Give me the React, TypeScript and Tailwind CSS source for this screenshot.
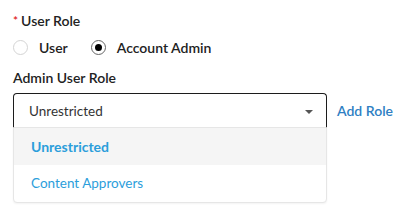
import React from 'react';

const font = { fontFamily: '"Source Sans Pro", Lato, "Noto Sans", sans-serif' };

const Radio = ({ checked, label }: { checked?: boolean; label: string }) => (
    <label className="flex items-center gap-[11px]">
        <span
            className={`w-[15px] h-[15px] rounded-full border flex items-center justify-center ${
                checked ? 'border-[#666]' : 'border-[#d4d4d4]'
            }`}
        >
            {checked && <span className="w-[7px] h-[7px] rounded-full bg-black" />}
        </span>
        <span className="text-[14px] font-semibold text-[#222]">{label}</span>
    </label>
);

export default function App() {
    return (
        <div className="w-[402px] h-[218px] bg-white pl-[13px] pt-[11px]" style={font}>
            {/* User role */}
            <div className="flex h-[20px] text-[14px] font-semibold text-[#222] leading-[20px]">
                <span className="text-[#e02020] text-[12px] leading-[12px] mr-[3px] mt-[4px]">*</span>
                User Role
            </div>
            <div className="flex items-center gap-[23px] h-[20px] mt-[6px]">
                <Radio label="User" />
                <Radio checked label="Account Admin" />
            </div>

            {/* Admin role */}
            <div className="mt-[10px] h-[20px] flex items-center text-[14px] font-semibold text-[#222]">
                Admin User Role
            </div>
            <div className="flex items-center mt-[6px]">
                <div className="relative w-[314px]">
                    <div className="h-[35px] border border-b-0 border-[#1c1c1c] rounded-t-[4px] flex items-center justify-between pl-[15px] pr-[13px] text-[13.5px] text-[#333]">
                        <span>Unrestricted</span>
                        <svg width="8" height="4" viewBox="0 0 8 4" className="mt-[1px]">
                            <path d="M0 0h8L4 4z" fill="#555" />
                        </svg>
                    </div>
                    <div className="absolute left-0 top-[34px] w-[314px] bg-white border border-[#e6e6e6] rounded-b-[4px] shadow-[0_1px_2px_rgba(0,0,0,0.05)]">
                        <div className="h-[37px] bg-[#f5f5f5] flex items-center pl-[17px] text-[14px] font-bold text-[#2b9edb]">
                            Unrestricted
                        </div>
                        <div className="h-[37px] flex items-center pl-[17px] text-[13.5px] text-[#2b9edb]">
                            Content Approvers
                        </div>
                    </div>
                </div>
                <a className="ml-[10px] text-[14px] font-semibold text-[#2f7fc3]">Add Role</a>
            </div>
        </div>
    );
}
